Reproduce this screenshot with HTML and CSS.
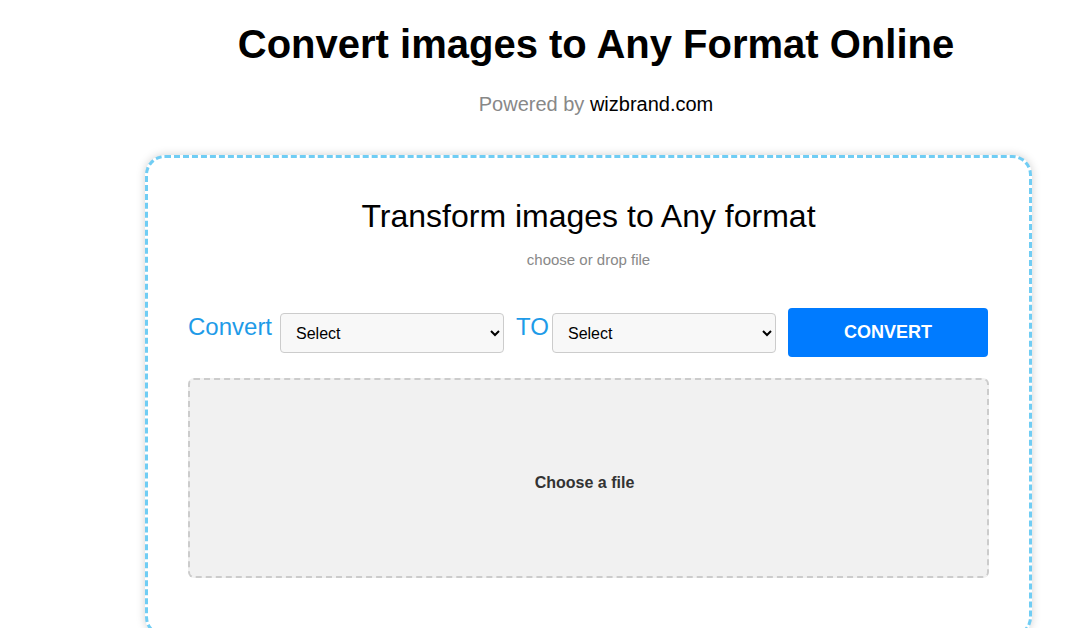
FILE: index.html
```html
<!DOCTYPE html>
<html lang="en">
<head>
<meta charset="utf-8">
<title>Convert images to Any Format Online</title>
<link rel="stylesheet" href="styles.css">
</head>
<body>
<header class="header">
  <h1 class="title">Convert images to Any Format Online</h1>
  <p class="powered">Powered by <span class="brand">wizbrand.com</span></p>
</header>
<main class="card">
  <h2 class="card-title">Transform images to Any format</h2>
  <p class="hint">choose or drop file</p>
  <div class="row">
    <label class="lbl lbl-convert">Convert</label>
    <select class="sel"><option>Select</option></select>
    <label class="lbl lbl-to">TO</label>
    <select class="sel"><option>Select</option></select>
    <button class="btn">CONVERT</button>
  </div>
  <div class="drop">Choose a file</div>
</main>
</body>
</html>
```
FILE: styles.css
```css
html, body {
  margin: 0;
  padding: 0;
  background: #fff;
  font-family: "Liberation Sans", Arial, sans-serif;
}
.header {
  margin-left: 106px;
  text-align: center;
  padding-top: 21px;
}
.title {
  margin: 0;
  font-size: 40px;
  font-weight: bold;
  color: #000;
  line-height: 46px;
}
.powered {
  margin: 26px 0 0;
  font-size: 20px;
  line-height: 23px;
  color: #888;
}
.brand { color: #000; }
.card {
  box-sizing: border-box;
  width: 887px;
  margin: 39px 0 0 145px;
  border: 3px dashed #70cdf4;
  border-radius: 20px;
  box-shadow: 0 0 10px rgba(0, 0, 0, 0.18);
  padding: 40px 40px 56px;
  background: #fff;
}
.card-title {
  margin: 0;
  text-align: center;
  font-size: 32px;
  font-weight: normal;
  line-height: 36px;
  color: #000;
}
.hint {
  margin: 17px 0 0;
  text-align: center;
  font-size: 15px;
  line-height: 17px;
  color: #888;
}
.row {
  display: flex;
  align-items: flex-start;
  margin-top: 40px;
}
.lbl {
  font-size: 24px;
  line-height: 28px;
  color: #1e9be8;
  padding-top: 5px;
}
.lbl-convert { margin-right: 8px; }
.lbl-to { margin-right: 3px; }
.sel {
  box-sizing: border-box;
  width: 224px;
  height: 40px;
  margin-top: 5px;
  margin-right: 12px;
  border: 1px solid #ccc;
  border-radius: 4px;
  background-color: #f8f8f8;
  font-family: "Liberation Sans", Arial, sans-serif;
  font-size: 16px;
  color: #000;
  padding: 0 8px 0 11px;
}
.btn {
  width: 200px;
  height: 49px;
  border: none;
  border-radius: 4px;
  background: #007bff;
  color: #fff;
  font-family: "Liberation Sans", Arial, sans-serif;
  font-size: 18px;
  font-weight: bold;
}
.drop {
  box-sizing: border-box;
  margin-top: 21px;
  height: 200px;
  border: 2px dashed #ccc;
  border-radius: 6px;
  background: #f1f1f1;
  display: flex;
  align-items: center;
  justify-content: center;
  font-size: 16px;
  font-weight: bold;
  color: #333;
  padding: 10px 8px 0 0;
}
```
